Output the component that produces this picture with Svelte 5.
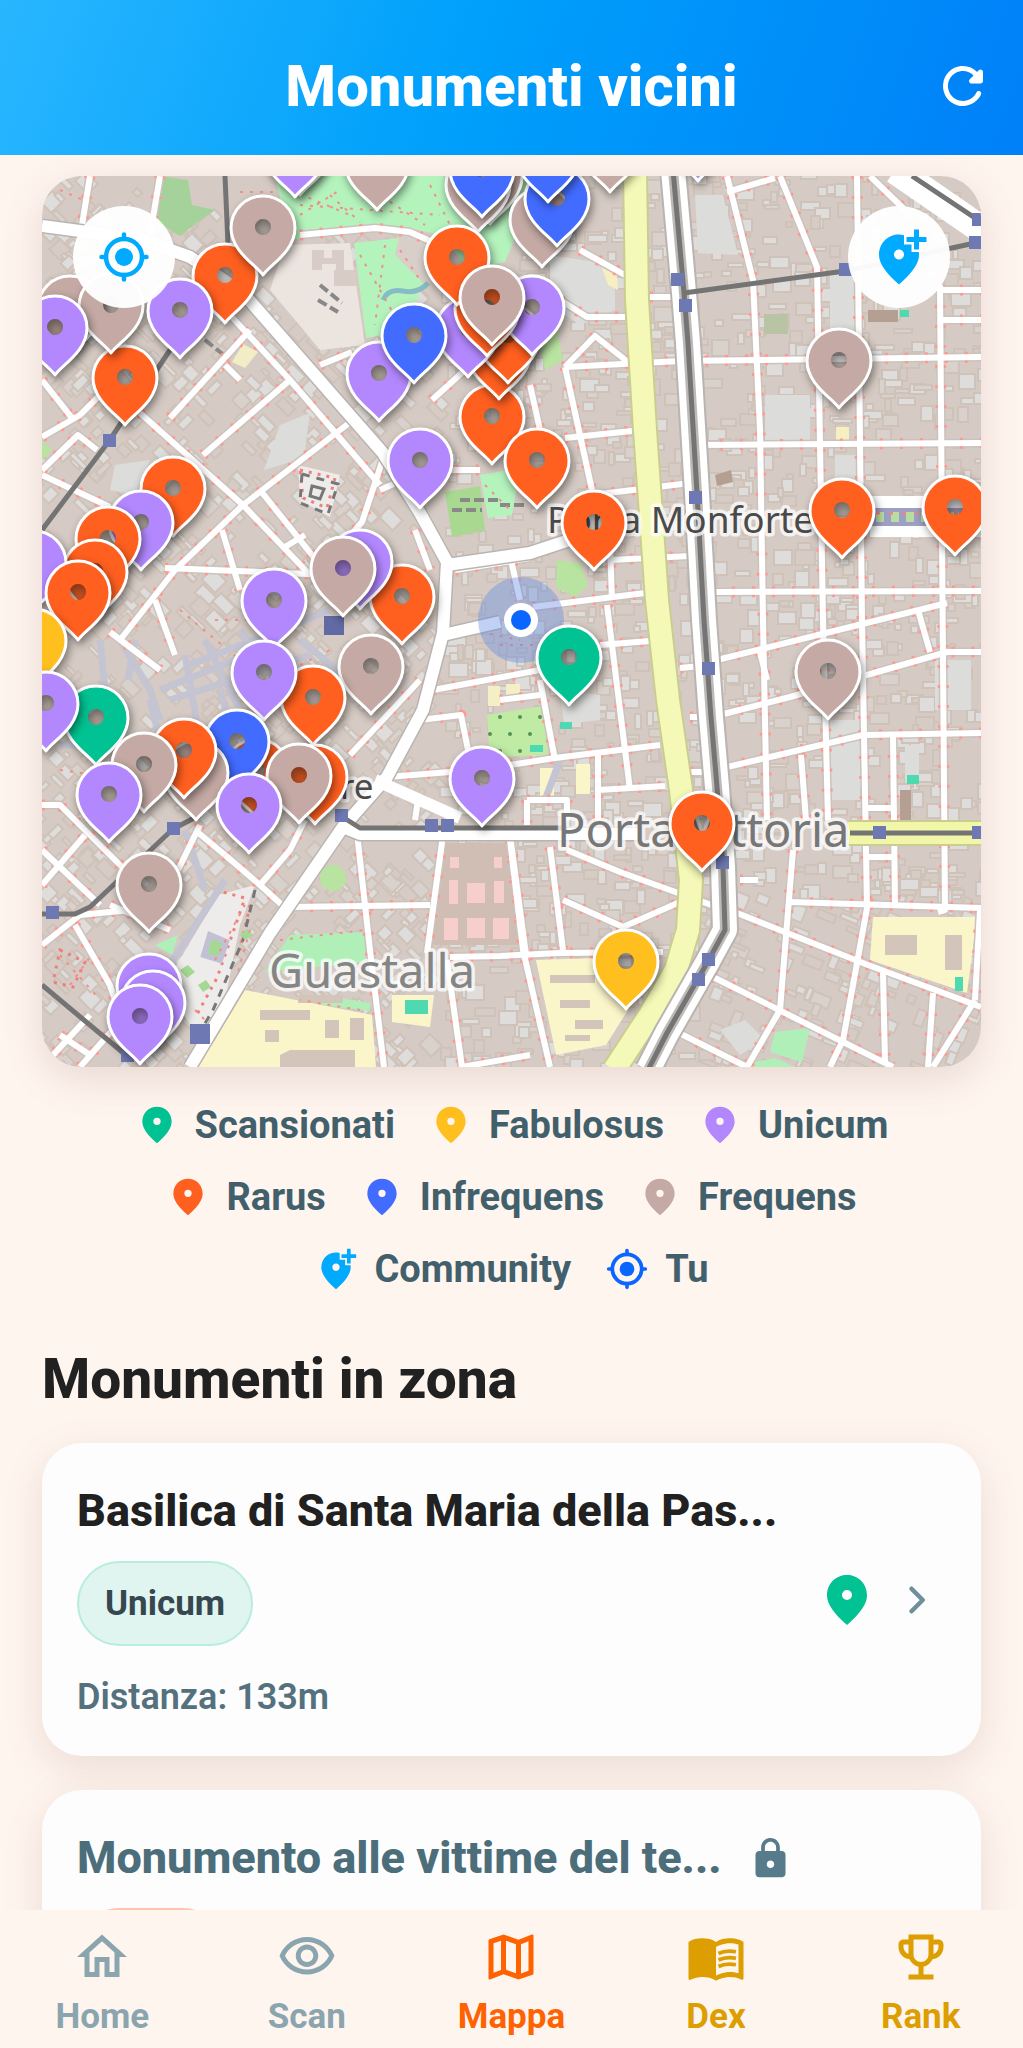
<script>
  const colors = {
    green: '#00c292',
    yellow: '#ffbf1f',
    purple: '#b388ff',
    orange: '#ff5f1f',
    blue: '#426cff',
    gray: '#c4a9a4'
  };

  const pinPath =
    'M12 2c-4.2 0-8 3.22-8 8.2 0 3.32 2.67 7.25 8 11.8 5.33-4.55 8-8.48 8-11.8C20 5.22 16.2 2 12 2zm0 10a2 2 0 1 1 0-4 2 2 0 0 1 0 4z';
  const addPinPath =
    'M20 1v3h3v2h-3v3h-2V6h-3V4h3V1h2zM12 13c1.1 0 2-.9 2-2s-.9-2-2-2-2 .9-2 2 .9 2 2 2zm2-9.75V7h3v3h2.92c.05.39.08.79.08 1.2 0 3.32-2.67 7.25-8 11.8-5.33-4.55-8-8.48-8-11.8C4 6.22 7.8 3 12 3c.68 0 1.35.08 2 .25z';

  const legend = [
    [
      { label: 'Scansionati', kind: 'pin', color: 'green' },
      { label: 'Fabulosus', kind: 'pin', color: 'yellow' },
      { label: 'Unicum', kind: 'pin', color: 'purple' }
    ],
    [
      { label: 'Rarus', kind: 'pin', color: 'orange' },
      { label: 'Infrequens', kind: 'pin', color: 'blue' },
      { label: 'Frequens', kind: 'pin', color: 'gray' }
    ],
    [
      { label: 'Community', kind: 'add' },
      { label: 'Tu', kind: 'locate' }
    ]
  ];

  // Markers in drawing order: x and y of the hole, rarity colour.
  const markers = [
    [300, 147, 'blue'], [295, 149, 'purple'], [377, 162, 'gray'], [490, 176, 'gray'],
    [478, 184, 'gray'], [482, 169, 'blue'], [542, 219, 'gray'], [557, 198, 'blue'],
    [548, 154, 'blue'], [610, 144, 'gray'], [698, 133, 'purple'], [125, 377, 'orange'],
    [225, 275, 'orange'], [263, 227, 'gray'], [70, 307, 'gray'],
    [111, 305, 'gray'], [180, 310, 'purple'], [55, 327, 'purple'],
    [492, 416, 'orange'], [499, 351, 'orange'], [508, 335, 'orange'], [532, 307, 'purple'],
    [468, 329, 'purple'], [487, 308, 'orange'], [457, 257, 'orange'], [492, 297, 'gray'],
    [379, 373, 'purple'], [414, 335, 'blue'], [420, 460, 'purple'],
    [537, 460, 'orange'], [594, 522, 'orange'], [839, 360, 'gray'], [842, 510, 'orange'],
    [955, 507, 'orange'], [173, 488, 'orange'], [141, 522, 'purple'], [108, 538, 'orange'],
    [95, 571, 'orange'], [34, 562, 'purple'], [78, 592, 'orange'], [34, 640, 'yellow'],
    [402, 596, 'orange'], [360, 561, 'purple'], [343, 568, 'gray'], [274, 600, 'purple'],
    [371, 666, 'gray'], [313, 697, 'orange'], [264, 672, 'purple'], [96, 717, 'green'],
    [46, 703, 'purple'], [257, 770, 'orange'], [237, 741, 'blue'], [196, 772, 'gray'],
    [184, 750, 'orange'], [144, 764, 'gray'], [109, 794, 'purple'], [315, 776, 'orange'],
    [299, 775, 'gray'], [249, 805, 'purple'], [482, 778, 'purple'], [149, 884, 'gray'],
    [149, 985, 'purple'], [153, 1002, 'purple'], [140, 1016, 'purple'],
    [569, 657, 'green'], [828, 671, 'gray'], [702, 823, 'orange'], [626, 961, 'yellow']
  ];

  const stations = [
    [677, 280], [685, 306], [845, 270], [978, 220], [975, 243], [695, 498], [708, 669],
    [722, 863], [708, 960], [698, 980], [109, 441], [173, 829], [52, 913], [341, 816],
    [431, 826], [447, 826], [879, 833], [978, 833], [127, 1056]
  ];

  const streets = [
    // east grid
    'M727 176 753 280 760 430 763 620 767 820', 'M780 176 817 267 823 620 828 820',
    'M857 176 862 620 867 908 843 1040 830 1067', 'M940 285 945 910 938 912',
    'M565 367 680 361 981 357', 'M700 445 981 443', 'M712 592 981 591', 'M940 290H981',
    'M940 320H981', 'M717 660 947 603', 'M720 715 790 697 947 652H981',
    'M723 768 863 735 981 733', 'M893 735 895 907', 'M790 902 981 908',
    'M737 913 868 965 981 1007', 'M793 850 780 1010 747 1067', 'M713 977 893 1067',
    'M883 973 885 1062', 'M933 993 928 1067', 'M975 1000 933 1067', 'M865 808H893',
    'M865 857H895', 'M980 910 975 1000', 'M760 652 767 680', 'M801 755 806 820',
    'M918 610 930 652', 'M727 192 775 178', 'M870 176 905 210', 'M740 880H758',
    'M650 297H675', 'M580 250 625 275 M560 300 587 317H625', 'M565 367 595 336 628 362',
    'M565 367 592 490', 'M530 385 540 430', 'M565 438 632 431', 'M592 495 690 483',
    // centre
    'M533 607 645 593', 'M607 605 630 790', 'M600 645 650 641', 'M680 668 700 666',
    'M540 680 555 760', 'M510 765 555 758 660 745', 'M598 755V820', 'M598 790 665 786',
    'M433 690 540 670', 'M527 800H567V820', 'M527 800V825', 'M510 840 523 950 550 1067',
    'M550 847 563 950', 'M567 850 620 872 717 907', 'M563 900 623 927 680 902',
    'M450 957 500 956 560 953 663 952', 'M679 1033 747 1067', 'M690 717H705', 'M690 772H710',
    'M443 835 427 953', 'M510 835 526 955', 'M357 833 370 950 384 1067', 'M290 907 430 905',
    'M447 960 462 1067', 'M462 1067 530 1055', 'M455 570 530 558 M511 560 520 600',
    'M610 545 612 600', 'M610 560 690 556', 'M420 720 461 715 470 760', 'M350 755 420 680',
    'M387 777 450 772',
    // north west
    'M90 176 82 225', 'M160 176 150 235', 'M170 418 250 330', 'M203 455 290 380',
    'M243 505 353 420', 'M140 413 243 505 310 575', 'M230 315 290 380 380 485',
    'M225 365 240 380', 'M42 437 80 415 110 385', 'M42 380 72 418', 'M42 470 78 435 97 450',
    'M42 475 110 507', 'M243 505 175 570 120 640', 'M260 490 340 590', 'M283 548 305 535',
    'M222 530 240 590', 'M165 568 330 575', 'M380 490 425 470 480 470', 'M320 365 352 352',
    'M300 235 375 228 410 232 450 250', 'M385 453 362 522 330 560', 'M415 530 430 570',
    'M110 632 160 670', 'M155 600 175 655', 'M432 400 465 370',
    // south west
    'M42 805 60 805 125 870', 'M42 885 85 835', 'M42 850 100 905', 'M42 945 80 915 130 910',
    'M75 925 110 985 115 1000', 'M80 1067 130 1010', 'M42 1067 90 1015', 'M195 830 225 855',
    'M225 855 260 885 282 905', 'M260 885 290 850 305 820', 'M110 905 170 930',
    'M200 825 178 870', 'M60 1035 90 1055', 'M418 800 415 820', 'M500 700 540 695'
  ];

  const boulevard =
    'M635 170 637 300 645 430 657 600 668 700 681 790 691 880 688 930 676 970 650 1015 614 1070';
  const ringRoad =
    'M42 226 140 239 190 257 243 293 383 453 420 513 447 562 443 633 423 710 387 777 343 827 270 933 190 1067';
  const railway =
    'M673 170 684 293 688 343 697 493 704 620 711 717 717 787 723 867 725 930 707 963 667 1033 648 1070';

  // Small blocks between the streets, repeatable between renders.
  let seed = 7;
  const rand = () => {
    seed = (seed * 16807) % 2147483647;
    return seed / 2147483647;
  };
  const blocks = Array.from({ length: 2600 }, () => {
    const x = Math.round(36 + rand() * 945);
    const y = Math.round(170 + rand() * 897);
    return {
      x,
      y,
      w: Math.round(5 + rand() * 15),
      h: Math.round(4 + rand() * 12),
      turn: x < 440 ? 45 : x > 700 && y > 890 ? 22 : 0,
      fill: ['#dedddb', '#dddddc', '#d6ccc5', '#dedddc', '#d9d2cc'][Math.floor(rand() * 5)]
    };
  });

  const arcades = [
    'M120 640 150 690 160 720', 'M190 665 330 610', 'M100 640 105 690', 'M170 700 310 655',
    'M205 640 250 730', 'M240 630 290 700', 'M135 640 128 680', 'M150 700 160 740',
    'M185 655 200 740', 'M295 385 380 485', 'M185 830 205 890', 'M225 880 170 965',
    'M560 760 545 800', 'M555 756 625 750', 'M160 690 260 650', 'M220 690 235 740',
    'M300 640 350 680', 'M60 745H90'
  ];

  const footpaths = [
    'M290 190 350 215', 'M365 185 425 225', 'M430 185 455 235', 'M360 255 400 325',
    'M385 245 375 325', 'M400 250 420 280', 'M300 215 340 190', 'M60 190 95 205',
    'M240 192H275', 'M215 620H250', 'M180 610 240 660', 'M60 770 95 775',
    'M300 665 330 650', 'M500 645H540', 'M480 632 520 640', 'M280 940 365 930',
    'M360 1010 300 1000', 'M300 205 440 215', 'M460 190 475 230', 'M330 195 360 222',
    'M60 955 100 1000', 'M70 985 95 950', 'M485 485 510 510', 'M215 960 245 905',
    'M230 1000 250 930', 'M195 1010 215 1030'
  ];

  const tabs = [
    {
      label: 'Home', tone: 'muted',
      d: 'M12 5.69l5 4.5V18h-2v-6H9v6H7v-7.81l5-4.5M12 3L2 12h3v8h6v-6h2v6h6v-8h3L12 3z'
    },
    {
      label: 'Scan', tone: 'muted',
      d: 'M12 6c3.79 0 7.17 2.13 8.82 5.5C19.17 14.87 15.79 17 12 17s-7.17-2.13-8.82-5.5C4.83 8.13 8.21 6 12 6m0-2C7 4 2.73 7.11 1 11.5 2.73 15.89 7 19 12 19s9.27-3.11 11-7.5C21.27 7.11 17 4 12 4zm0 5c1.38 0 2.5 1.12 2.5 2.5S13.38 14 12 14s-2.5-1.12-2.5-2.5S10.62 9 12 9m0-2c-2.48 0-4.5 2.02-4.5 4.5S9.52 16 12 16s4.5-2.02 4.5-4.5S14.48 7 12 7z'
    },
    {
      label: 'Mappa', tone: 'active',
      d: 'M20.5 3l-.16.03L15 5.1 9 3 3.36 4.9c-.21.07-.36.25-.36.48V20.5c0 .28.22.5.5.5l.16-.03L9 18.9l6 2.1 5.64-1.9c.21-.07.36-.25.36-.48V3.5c0-.28-.22-.5-.5-.5zM10 5.47l4 1.4v11.66l-4-1.4V5.47zm-5 .99l3-1.01v11.7l-3 1.16V6.46zm14 11.08l-3 1.01V6.86l3-1.16v11.84z'
    },
    {
      label: 'Dex', tone: 'gold',
      d: 'M21 5c-1.11-.35-2.33-.5-3.5-.5-1.95 0-4.05.4-5.5 1.5-1.45-1.1-3.55-1.5-5.5-1.5S2.45 4.9 1 6v14.65c0 .25.25.5.5.5.1 0 .15-.05.25-.05C3.1 20.45 5.05 20 6.5 20c1.95 0 4.05.4 5.5 1.5 1.35-.85 3.8-1.5 5.5-1.5 1.65 0 3.35.3 4.75 1.05.1.05.15.05.25.05.25 0 .5-.25.5-.5V6c-.6-.45-1.25-.75-2-1zm0 13.5c-1.1-.35-2.3-.5-3.5-.5-1.7 0-4.15.65-5.5 1.5V8c1.35-.85 3.8-1.5 5.5-1.5 1.2 0 2.4.15 3.5.5v11.5z',
      lines: 'M13 10.6c2-1 4.500-1.200 7-.7M13 13.200c2-1 4.500-1.200 7-.7M13 15.800c2-1 4.500-1.200 7-.7'
    },
    {
      label: 'Rank', tone: 'gold',
      d: 'M19 5h-2V3H7v2H5c-1.1 0-2 .9-2 2v1c0 2.55 1.92 4.63 4.39 4.94.63 1.5 1.98 2.63 3.61 2.96V19H7v2h10v-2h-4v-3.1c1.63-.33 2.98-1.46 3.61-2.96C19.08 12.63 21 10.55 21 8V7c0-1.1-.9-2-2-2zM5 8V7h2v3.82C5.84 10.4 5 9.3 5 8zm7 6c-1.65 0-3-1.35-3-3V5h6v6c0 1.65-1.35 3-3 3zm7-6c0 1.3-.84 2.4-2 2.82V7h2v1z'
    }
  ];
</script>

{#snippet locate()}
  <svg class="locate" viewBox="0 0 24 24" aria-hidden="true">
    <circle cx="12" cy="12" r="4" fill="currentColor" />
    <circle cx="12" cy="12" r="8" fill="none" stroke="currentColor" stroke-width="2" />
    <path d="M12 2v2M12 20v2M2 12h2M20 12h2" stroke="currentColor" stroke-width="2" stroke-linecap="round" />
  </svg>
{/snippet}

<div class="app">
  <header>
    <h1>Monumenti vicini</h1>
    <button class="refresh" aria-label="Aggiorna">
      <svg viewBox="0 0 24 24" aria-hidden="true">
        <path fill="currentColor" d="M17.65 6.35c-1.63-1.63-3.94-2.57-6.48-2.31-3.67.37-6.69 3.35-7.1 7.02C3.52 15.91 7.27 20 12 20c3.19 0 5.93-1.87 7.21-4.56.32-.67-.16-1.44-.9-1.44-.37 0-.72.2-.88.53-1.13 2.43-3.84 3.97-6.8 3.31-2.22-.49-4.01-2.3-4.48-4.52C5.31 9.44 8.26 6 12 6c1.66 0 3.14.69 4.22 1.78l-1.51 1.51c-.63.63-.19 1.71.7 1.71H19c.55 0 1-.45 1-1V6.41c0-.89-1.08-1.34-1.71-.71l-.64.65z" />
      </svg>
    </button>
  </header>

  <main>
    <section class="map" aria-label="Mappa">
      <svg class="canvas" viewBox="42 176 939 891" preserveAspectRatio="xMidYMid slice">
        <rect x="42" y="176" width="939" height="891" fill="#d6cbc4" />
        <g stroke="#cfc2b9" stroke-width="2">
          {#each blocks as b}
            <rect x={b.x} y={b.y} width={b.w} height={b.h} fill={b.fill} transform="rotate({b.turn} {b.x} {b.y})" />
          {/each}
        </g>

        <!-- open ground, parks and schools -->
        <path d="M695 195h28l15 60-40-2zM280 425l30-12-6 45-40 12zM765 395h45v48h-45zM550 255l65 10v45l-35 15-30-20zM830 720h30v80h-30zM115 465l35-5-15 35-25-5zM830 275h25v70h-25zM835 455h24v30h-24zM935 660h36v50h-36zM905 745h14v38h-14zM720 1030l25-10 20 20-25 15zM560 690l40 5v25l-36 4z" fill="#dcdcdb" />
        <path d="M275 176H540L505 262 470 270 440 235 400 226 290 240z" fill="#b5f3bd" />
        <path d="M354 243 400 238 452 250 420 290 408 330 366 338z" fill="#b5f3bd" />
        <path d="M400 232 445 240 455 270 425 285 395 255z" fill="#d9cfc9" />
        <path d="M285 245 350 243 365 345 320 350 270 290z" fill="#ece4df" />
        <path d="M312 250h12v8h8v-8h12v20h-8v-6h-14v6h-10zM334 270h22v16h-22z" fill="#d8cdc6" />
        <path d="M160 176 188 180 192 205 215 210 198 222 180 236 157 222z" fill="#a5d29a" />
        <path d="M540 345 555 320 563 360 545 370zM42 440 52 450 42 460z" fill="#b9e3a0" />
        <path d="M445 492 480 486 485 530 452 537z" fill="#a9d991" />
        <path d="M480 475 520 468 512 515 488 518z" fill="#b5f3bd" />
        <path d="M557 560 580 563 588 585 575 597 556 588z" fill="#b9e3a0" />
        <path d="M487 715 543 706 548 755 490 757z" fill="#c0eba4" />
        <path d="M488 686h12v20h-12zM506 684h14v18h-14z" fill="#f6efc6" />
        <circle cx="333" cy="878" r="13" fill="#b9e3a0" />
        <path d="M155 945 178 935 172 955zM290 935 365 932 366 962 265 972zM320 995l50 8v8l-48-6zM775 1032l35-4-8 34-32-10zM755 1062l20-4 20 9h-42z" fill="#b0efb8" />
        <path d="M245 990 372 1015 376 1067H190L215 1040z" fill="#fbf6ca" />
        <path d="M392 995h42l-4 32-38-5zM536 960 598 958 628 1010 606 1045 556 1055zM576 764h14v30h-14zM540 768h14v28h-14z" fill="#fbf6ca" />
        <path d="M873 917 977 917 967 993 870 960z" fill="#fbf6ca" />
        <path d="M232 362 243 344 258 352 245 368z" fill="#f3edc6" />
        <path d="M836 427h13v13h-13zM602 268l14-4 2 26-10-5z" fill="#f6efc0" />
        <path d="M764 314h24v20h-24z" fill="#b9c4a4" />
        <path d="M405 1000h23v14h-23zM900 310h9v7h-9zM907 775h12v9h-12zM560 722h12v7h-12zM530 745h13v7h-13zM955 977h8v14h-8z" fill="#4fd9b0" />
        <path d="M280 1055l10-5h65v17h-75zM260 1010h50v10h-50zM325 1020h14v18h-14zM350 1018h14v22h-14zM265 1030h14v12h-14zM885 935h32v20h-32zM945 935h17v35h-17zM550 975h45v8h-45zM560 1000h30v8h-30zM575 1020h28v9h-28zM298 995h45v8h-45zM565 1035h25v6h-25z" fill="#d3c5ba" />
        <path d="M443 843 508 843 522 945 432 945z" fill="#d0bdb3" />
        <path d="M450 857h9v11h-9zM494 857h8v11h-8zM449 880h9v24h-9zM467 883h18v20h-18zM494 881h10v22h-10zM444 918h14v22h-14zM467 918h18v20h-18zM493 918h16v21h-16z" fill="#f6cfcd" />
        <path d="M715 475l16-5 2 12-16 4zM868 310h30v12h-30zM900 790h11v30h-11z" fill="#b59f93" />
        <path d="M383 300q5-12 20-9t25-8" fill="none" stroke="#86bcc4" stroke-width="5" />

        <!-- squares and cloisters -->
        <path d="M298 465 340 475 330 517 300 500zM218 895 255 885 240 925 220 1025 200 1040 165 985z" fill="#eeeceb" />
        <path d="M300 470 335 478 327 508 303 498zM215 890l30 8-28 80-22 40M250 905l-10 45M60 950l25 12-12 25-20-5z" fill="none" stroke="#ee7f7c" stroke-width="3" stroke-dasharray="3 6" />
        <path d="M302 474 338 484 328 514 300 503zM255 890l-12 50-30 70-15 25" fill="none" stroke="#777" stroke-width="3" stroke-dasharray="8 7" />
        <path d="M312 486l12 3-4 10-10-3z" fill="none" stroke="#777" stroke-width="3" />
        <path d="M210 935 226 942 220 960 204 955z" fill="#a5d993" stroke="#c2c1d3" stroke-width="6" />
        <path d="M240 935l7-6 6 6-8 5zM180 970l8-5 7 7-8 6zM198 985l8-5 5 7-8 5z" fill="#a5d993" />
        <path d="M320 285l22 18M318 300l20 12M205 340l20 16M460 500h40M452 510h30M500 505h25" stroke="#888" stroke-width="4" stroke-dasharray="10 4" />

        <g fill="none" stroke="#f28f88" stroke-width="2" stroke-dasharray="3 7">
          {#each footpaths as d}
            <path {d} />
          {/each}
        </g>
        <g fill="none" stroke="#c5c4d2" stroke-width="7">
          {#each arcades as d}
            <path {d} />
          {/each}
        </g>

        <!-- streets -->
        <g fill="none" stroke-linejoin="round">
          {#each streets as d}
            <path {d} stroke="#cbc2bd" stroke-width="9" />
            <path {d} stroke="#ff9890" stroke-width="11" stroke-dasharray="3 17" />
          {/each}
          {#each streets as d}
            <path {d} stroke="#fff" stroke-width="6" />
          {/each}

          <g stroke="#b9b4b1" stroke-width="15">
            <path d={ringRoad} />
            <path d="M447 565 530 553 600 530M443 635 500 622M343 827 360 834H640" />
          </g>
          <g stroke="#fff" stroke-width="12">
            <path d={ringRoad} />
            <path d="M447 565 530 553 600 530M443 635 500 622M343 827 360 834H640M375 780 460 818M870 502H981M870 531H981" />
            <path d="M895 170 985 232" stroke-width="28" />
          </g>
          <path d="M870 517H981" stroke="#9d9fc4" stroke-width="18" />
          <path d="M876 517H981" stroke="#b9dca0" stroke-width="10" stroke-dasharray="8 7" />
          <path d="M876 513H981" stroke="#e88888" stroke-width="3" stroke-dasharray="4 9" />

          <path d={boulevard} stroke="#c9ce90" stroke-width="26" />
          <path d={boulevard} stroke="#f4f9b7" stroke-width="22" />
          <path d="M848 833H981" stroke="#c9ce90" stroke-width="26" />
          <path d="M848 833H981" stroke="#f1f6a8" stroke-width="22" />

          <path d={railway} stroke="#b9b4b1" stroke-width="28" />
          <path d={railway} stroke="#fff" stroke-width="24" />
          <path d={railway} stroke="#bcb9b6" stroke-width="10" />
          <g stroke="#747474" stroke-width="5">
            <path d={railway} />
            <path d="M684 293 845 271 975 243M912 176 981 222M225 176 228 245 170 350 109 441 42 530" />
            <path d="M341 816 360 828H567M850 833H981M42 914H75L90 907 140 860 173 829 200 815M42 985 127 1056" />
          </g>
        </g>

        {#each stations as [x, y]}
          <rect x={x - 6} y={y - 7} width="13" height="13" fill="#6e78b2" />
        {/each}
        <rect x="324" y="616" width="20" height="19" fill="#626aa5" />
        <rect x="190" y="1024" width="20" height="20" fill="#6e78b2" />
        <g fill="#56935a">
          {#each [[500, 717], [520, 717], [540, 717], [490, 734], [510, 734], [530, 734], [520, 751], [500, 751]] as [x, y]}
            <circle cx={x} cy={y} r="2" />
          {/each}
        </g>

        <g class="places">
          <text x="269" y="988" font-size="47" fill="#858585">Guastalla</text>
          <text x="557" y="847" font-size="47" fill="#777777">Porta Vittoria</text>
          <text x="547" y="533" font-size="37" fill="#4a4a4a">Porta Monforte</text>
          <text x="340" y="799" font-size="35" fill="#4a4a4a">re</text>
        </g>

        <circle cx="521" cy="620" r="43" fill="#5c86e6" fill-opacity=".38" />
        <circle cx="521" cy="620" r="17" fill="#fff" />
        <circle cx="521" cy="620" r="10" fill="#0a66ff" />

        {#each markers as [x, y, color]}
          <g class="marker" transform="translate({x} {y})">
            <path d="M0 48C-7 38-32 24-32 1A32 32 0 0 1 32 1C32 24 7 38 0 48ZM0-8a8 8 0 1 0 0 16 8 8 0 0 0 0-16Z" fill={colors[color]} fill-rule="evenodd" />
            <path d="M0 48C-7 38-32 24-32 1A32 32 0 0 1 32 1C32 24 7 38 0 48Z" fill="none" stroke="#fff" stroke-width="3" stroke-linejoin="round" />
            <circle r="8" fill="#403830" fill-opacity=".2" />
          </g>
        {/each}
      </svg>
      <div class="controls">
        <button aria-label="Centra sulla mia posizione">{@render locate()}</button>
        <button aria-label="Aggiungi monumento">
          <svg class="plus" viewBox="0 0 24 24" aria-hidden="true"><path fill="currentColor" d={addPinPath} /></svg>
        </button>
      </div>
    </section>

    <div class="legend">
      {#each legend as row}
        <ul>
          {#each row as item}
            <li class={item.kind}>
              {#if item.kind === 'locate'}
                {@render locate()}
              {:else if item.kind === 'add'}
                <svg viewBox="0 0 24 24" aria-hidden="true"><path fill="currentColor" d={addPinPath} /></svg>
              {:else}
                <svg viewBox="0 0 24 24" aria-hidden="true"><path fill={colors[item.color]} d={pinPath} /></svg>
              {/if}
              <span>{item.label}</span>
            </li>
          {/each}
        </ul>
      {/each}
    </div>

    <h2>Monumenti in zona</h2>

    <div class="list">
      <article class="card">
        <div class="info">
          <h3>Basilica di Santa Maria della Pas...</h3>
          <span class="chip">Unicum</span>
          <p>Distanza: 133m</p>
        </div>
        <svg class="found" viewBox="0 0 24 24" aria-hidden="true"><path fill={colors.green} d={pinPath} /></svg>
        <svg class="chevron" viewBox="0 0 24 24" aria-hidden="true"><path d="M10 7l5 5-5 5" /></svg>
      </article>

      <article class="card locked">
        <div class="info">
          <h3>
            Monumento alle vittime del te...
            <svg class="lock" viewBox="0 0 24 24" aria-hidden="true">
              <path fill="currentColor" d="M18 8h-1V6c0-2.76-2.24-5-5-5S7 3.24 7 6v2H6c-1.1 0-2 .9-2 2v10c0 1.1.9 2 2 2h12c1.1 0 2-.9 2-2V10c0-1.1-.9-2-2-2zm-6 9c-1.1 0-2-.9-2-2s.9-2 2-2 2 .9 2 2-.9 2-2 2zM9 8V6c0-1.66 1.34-3 3-3s3 1.340 3 3v2H9z" />
            </svg>
          </h3>
          <span class="chip rare"></span>
        </div>
      </article>
    </div>
  </main>

  <nav>
    {#each tabs as tab}
      <a href="#{tab.label.toLowerCase()}" class={tab.tone}>
        <svg viewBox="0 0 24 24" aria-hidden="true">
          <path fill="currentColor" d={tab.d} />
          {#if tab.lines}
            <path fill="none" stroke="currentColor" stroke-width="1.5" d={tab.lines} />
          {/if}
        </svg>
        <span>{tab.label}</span>
      </a>
    {/each}
  </nav>
</div>

<style>
  :global(body) {
    margin: 0;
    background: #fff5ef;
  }
  .app {
    display: flex;
    flex-direction: column;
    height: 100vh;
    overflow: hidden;
    background: #fff5ef;
    color: #212121;
    font-family: Roboto, 'Liberation Sans', sans-serif;
  }
  h1, h2, h3, p, ul {
    margin: 0;
    padding: 0;
  }
  button {
    display: grid;
    place-items: center;
    padding: 0;
    border: 0;
    background: none;
  }
  header {
    display: grid;
    grid-template-columns: 60px 1fr 60px;
    align-items: center;
    flex: none;
    padding: 48px 30px 31px;
    background: linear-gradient(110deg, #29b6ff 0%, #00a0fb 45%, #0080f8 100%);
    color: #fff;
  }
  h1 {
    grid-column: 2;
    font-size: 58px;
    line-height: 76px;
    font-weight: 800;
    text-align: center;
  }
  .refresh {
    color: #fff;
  }
  .refresh svg {
    width: 60px;
    height: 60px;
  }
  main {
    flex: 1;
    min-height: 0;
    overflow: hidden;
    padding: 21px 42px 0;
  }
  .map {
    position: relative;
    overflow: hidden;
    border-radius: 40px;
    box-shadow: 0 12px 40px rgba(110, 70, 60, 0.16);
  }
  .canvas {
    display: block;
    width: 100%;
    aspect-ratio: 939 / 891;
  }
  .places {
    font-family: 'Noto Sans', sans-serif;
    paint-order: stroke;
    stroke: rgba(255, 255, 255, 0.75);
    stroke-width: 7px;
    stroke-linejoin: round;
  }
  .marker {
    filter: drop-shadow(2px 4px 4px rgba(0, 0, 0, 0.45));
  }
  .controls {
    position: absolute;
    top: 30px;
    left: 31px;
    right: 31px;
    display: flex;
    justify-content: space-between;
  }
  .controls button {
    width: 102px;
    height: 102px;
    border-radius: 50%;
    background: rgba(255, 255, 255, 0.96);
    color: #00aaff;
  }
  .controls .locate {
    width: 54px;
    height: 54px;
  }
  .controls .plus {
    width: 60px;
    height: 60px;
  }
  .legend {
    display: grid;
    gap: 28px;
    margin-top: 36px;
  }
  .legend ul {
    display: flex;
    justify-content: center;
    gap: 34px;
    list-style: none;
  }
  .legend li {
    display: flex;
    align-items: center;
    gap: 16px;
    height: 44px;
    color: #42606b;
    font-size: 38px;
    font-weight: 700;
  }
  .legend svg {
    width: 44px;
    height: 44px;
  }
  .add svg {
    color: #00aaff;
  }
  .legend .locate svg {
    color: #0a66ff;
  }
  h2 {
    margin-top: 56px;
    font-size: 55px;
    line-height: 64px;
    font-weight: 800;
  }
  .list {
    display: grid;
    gap: 34px;
    margin-top: 32px;
  }
  .card {
    display: flex;
    align-items: center;
    gap: 12px;
    padding: 36px 38px 36px 35px;
    border-radius: 40px;
    background: #fdfdfd;
    box-shadow: 0 12px 40px rgba(110, 70, 60, 0.14);
  }
  .info {
    display: flex;
    flex-direction: column;
    align-items: flex-start;
    flex: 1;
    min-width: 0;
  }
  h3 {
    display: flex;
    align-items: center;
    gap: 26px;
    font-size: 45px;
    line-height: 64px;
    font-weight: 800;
    white-space: nowrap;
  }
  .chip {
    box-sizing: border-box;
    min-width: 148px;
    min-height: 85px;
    margin-top: 18px;
    padding: 0 26px;
    border: 2px solid #b8eddd;
    border-radius: 43px;
    background: #e0f5ef;
    color: #37474f;
    font-size: 35px;
    line-height: 81px;
    font-weight: 700;
  }
  .rare {
    border-color: #ffc4ae;
    background: #ffebe4;
  }
  .card p {
    margin-top: 28px;
    color: #54717d;
    font-size: 36px;
    line-height: 46px;
    font-weight: 600;
  }
  .locked h3 {
    color: #4c6e7b;
  }
  .lock {
    width: 45px;
    height: 45px;
    color: #567b8a;
  }
  .found {
    width: 60px;
    height: 60px;
  }
  .chevron {
    width: 54px;
    height: 54px;
    fill: none;
    stroke: #6f8f9c;
    stroke-width: 2;
    stroke-linecap: round;
    stroke-linejoin: round;
  }
  nav {
    display: grid;
    grid-template-columns: repeat(5, 1fr);
    flex: none;
    padding: 17px 0 9px;
    background: #fff5ef;
  }
  nav a {
    display: flex;
    flex-direction: column;
    align-items: center;
    gap: 8px;
    font-size: 35px;
    line-height: 44px;
    font-weight: 700;
    text-decoration: none;
  }
  nav svg {
    width: 60px;
    height: 60px;
  }
  .muted {
    color: #8ba5af;
  }
  .active {
    color: #ff6200;
  }
  .gold {
    color: #dc9e00;
  }
</style>
